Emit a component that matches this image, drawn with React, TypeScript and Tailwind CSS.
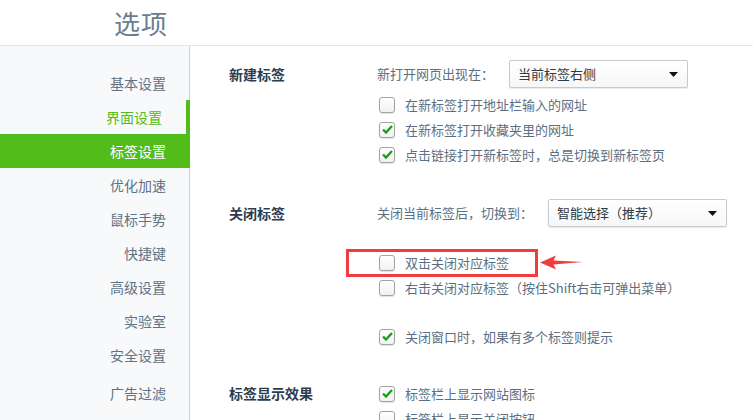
import React from "react";

const menu = [
  { label: "基本设置" },
  { label: "界面设置", hover: true },
  { label: "标签设置", active: true },
  { label: "优化加速" },
  { label: "鼠标手势" },
  { label: "快捷键" },
  { label: "高级设置" },
  { label: "实验室" },
  { label: "安全设置" },
  { label: "广告过滤", gap: true },
];

function Checkbox({ checked }: { checked?: boolean }) {
  return (
    <span className="w-4 h-4 shrink-0 rounded-[3px] border border-[#a3a3a3] bg-gradient-to-b from-white to-[#f1f1f1] shadow-[0_1px_1px_rgba(0,0,0,0.12)] flex items-center justify-center">
      {checked && (
        <svg width="11" height="9" viewBox="0 0 11 9">
          <path d="M1 4.5 L4 7.5 L10 1" fill="none" stroke="#1c9e1c" strokeWidth="2.4" />
        </svg>
      )}
    </span>
  );
}

function CheckRow({ checked, children }: { checked?: boolean; children: React.ReactNode }) {
  return (
    <div className="h-[25px] flex items-center gap-[10px] pl-[2px]">
      <Checkbox checked={checked} />
      <span>{children}</span>
    </div>
  );
}

function Select({ value }: { value: string }) {
  return (
    <div className="w-[179px] h-[28px] border border-[#c6cacf] rounded-[2px] bg-gradient-to-b from-white to-[#f6f7f8] shadow-[0_1px_1px_rgba(0,0,0,0.08)] flex items-center justify-between pl-[8px] pr-[9px] text-[#2f3a45] text-[13px]">
      <span>{value}</span>
      <svg width="9" height="5" viewBox="0 0 9 5">
        <path d="M0 0 H9 L4.5 5 Z" fill="#111" />
      </svg>
    </div>
  );
}

export default function App() {
  return (
    <div className="w-[753px] h-[420px] overflow-hidden bg-white flex flex-col font-['Noto_Sans_CJK_SC',sans-serif] text-[13px] text-[#5c6f82]">
      {/* Header */}
      <div className="h-[46px] shrink-0 border-b border-[#e4e6e8] flex items-center pl-[114px]">
        <h1 className="text-[26px] leading-none text-[#6b7d8f] tracking-[1px]">选项</h1>
      </div>

      <div className="flex flex-1 min-h-0">
        {/* Sidebar */}
        <div className="w-[190px] shrink-0 bg-[#f7f9fb] border-r border-[#cfd2d5] pt-[20px] text-[14px]">
          {menu.map((m) => (
            <div
              key={m.label}
              className={
                "h-[34px] flex items-center justify-end pr-[24px] -mr-px " +
                (m.gap ? "mt-[4px] " : "") +
                (m.active
                  ? "bg-[#52bd1a] text-white"
                  : m.hover
                  ? "text-[#52bd1a] border-r-4 border-[#52bd1a] pr-[21px]"
                  : "text-[#5f7286]")
              }
            >
              {m.label}
            </div>
          ))}
        </div>

        {/* Content */}
        <div className="flex-1 pl-[39px] pt-[14px]">
          {/* 新建标签 */}
          <div className="flex">
            <div className="w-[148px] h-[28px] flex items-center text-[14px] font-bold text-[#2c3d4f]">新建标签</div>
            <div className="flex flex-col">
              <div className="flex items-center">
                <span className="w-[132px]">新打开网页出现在：</span>
                <Select value="当前标签右侧" />
              </div>
              <div className="mt-[4px]">
                <CheckRow>在新标签打开地址栏输入的网址</CheckRow>
                <CheckRow checked>在新标签打开收藏夹里的网址</CheckRow>
                <CheckRow checked>点击链接打开新标签时，总是切换到新标签页</CheckRow>
              </div>
            </div>
          </div>

          {/* 关闭标签 */}
          <div className="flex mt-[32px]">
            <div className="w-[148px] h-[28px] flex items-center text-[14px] font-bold text-[#2c3d4f]">关闭标签</div>
            <div className="flex flex-col">
              <div className="flex items-center">
                <span className="w-[171px]">关闭当前标签后，切换到：</span>
                <Select value="智能选择（推荐）" />
              </div>
              <div className="mt-[23px] relative">
                <CheckRow>双击关闭对应标签</CheckRow>
                <div className="absolute left-[-31px] top-[-1px] w-[192px] h-[28px] border-[3px] border-[#f23b3b]" />
                <svg className="absolute left-[163px] top-[5px]" width="43" height="15" viewBox="0 0 43 15">
                  <path d="M0 7.5 L16 0.5 L13.5 5.5 L43 7 L13.5 9.5 L16 14.5 Z" fill="#f23b3b" />
                </svg>
              </div>
              <CheckRow>右击关闭对应标签（按住Shift右击可弹出菜单）</CheckRow>
              <div className="mt-[24px]">
                <CheckRow checked>关闭窗口时，如果有多个标签则提示</CheckRow>
              </div>
            </div>
          </div>

          {/* 标签显示效果 */}
          <div className="flex mt-[32px]">
            <div className="w-[148px] h-[25px] flex items-center text-[14px] font-bold text-[#2c3d4f]">标签显示效果</div>
            <div className="flex flex-col">
              <CheckRow checked>标签栏上显示网站图标</CheckRow>
              <CheckRow>标签栏上显示关闭按钮</CheckRow>
            </div>
          </div>
        </div>
      </div>
    </div>
  );
}
